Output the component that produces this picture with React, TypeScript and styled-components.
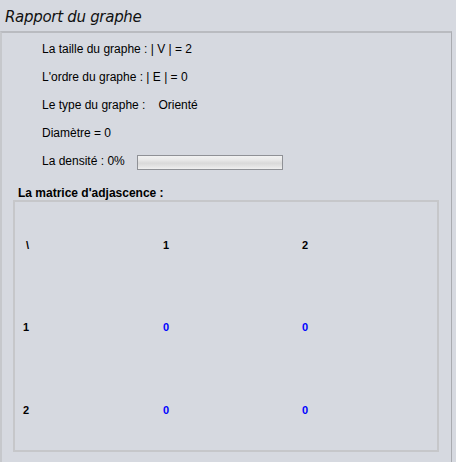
import React from "react";
import styled, { createGlobalStyle } from "styled-components";

const Global = createGlobalStyle`
  html, body { margin: 0; padding: 0; background: #d6d9e0; }
  body { font-family: "Liberation Sans", Arial, sans-serif; color: #000; }
`;

const Page = styled.div`
  width: 456px;
  height: 462px;
  background: #d6d9e0;
  display: flex;
  flex-direction: column;
  overflow: hidden;
`;

const TitleBar = styled.div`
  height: 31px;
  padding-left: 5px;
  display: flex;
  align-items: flex-start;
  box-sizing: border-box;
`;

const Title = styled.h1`
  margin: 8px 0 0 0;
  font-family: "DejaVu Sans", sans-serif;
  font-style: italic;
  font-weight: normal;
  font-size: 15px;
  line-height: 18px;
  color: #111;
  letter-spacing: -0.3px;
`;

const Panel = styled.div`
  width: 452px;
  flex: 1;
  box-sizing: border-box;
  border-top: 2px solid #b9bbc0;
  border-left: 2px solid #c6c8cc;
  border-right: 1px solid #a9abb0;
  display: flex;
  flex-direction: column;
  padding-top: 2px;
`;

const InfoList = styled.div`
  display: flex;
  flex-direction: column;
  padding-left: 40px;
`;

const InfoRow = styled.div`
  height: 28px;
  display: flex;
  align-items: center;
  font-size: 12px;
  white-space: pre;
`;

const Value = styled.span`
  margin-left: 13px;
`;

const Progress = styled.div`
  margin-left: 12px;
  margin-top: 2px;
  width: 146px;
  height: 15px;
  box-sizing: border-box;
  border: 1px solid #8f9196;
  background: linear-gradient(
    to bottom,
    #f2f2f2 0%,
    #e9e9e9 30%,
    #d9d9d9 55%,
    #e4e4e4 80%,
    #f0f0f0 100%
  );
`;

const MatrixLabel = styled.div`
  margin: 9px 0 0 16px;
  height: 16px;
  padding-top: 2px;
  box-sizing: border-box;
  font-size: 12px;
  font-weight: bold;
  line-height: 14px;
`;

const MatrixBox = styled.div`
  margin: 0 0 0 11px;
  width: 426px;
  height: 252px;
  box-sizing: border-box;
  border: 2px solid #c6c7ca;
  display: grid;
  grid-template-columns: 140px 139px 1fr;
  grid-template-rows: repeat(3, 1fr);
`;

const Cell = styled.div<{ $value?: boolean; $shift?: number }>`
  display: flex;
  align-items: center;
  padding-left: ${(p) => 8 + (p.$shift ?? 0)}px;
  padding-top: 3px;
  font-size: 11px;
  font-weight: bold;
  color: ${(p) => (p.$value ? "#0000ff" : "#000")};
`;

const headers = ["1", "2"];
const matrix = [
  [0, 0],
  [0, 0],
];

export default function App() {
  return (
    <Page>
      <Global />
      <TitleBar>
        <Title>Rapport du graphe</Title>
      </TitleBar>
      <Panel>
        <InfoList>
          <InfoRow>La taille du graphe : | V | = 2</InfoRow>
          <InfoRow>L'ordre du graphe : | E | = 0</InfoRow>
          <InfoRow>
            Le type du graphe :<Value>Orienté</Value>
          </InfoRow>
          <InfoRow>Diamètre = 0</InfoRow>
          <InfoRow>
            La densité : 0%
            <Progress />
          </InfoRow>
        </InfoList>
        <MatrixLabel>La matrice d'adjascence :</MatrixLabel>
        <MatrixBox>
          <Cell $shift={3}>\</Cell>
          {headers.map((h) => (
            <Cell key={h}>{h}</Cell>
          ))}
          {matrix.map((row, i) => (
            <React.Fragment key={i}>
              <Cell>{headers[i]}</Cell>
              {row.map((v, j) => (
                <Cell key={j} $value>
                  {v}
                </Cell>
              ))}
            </React.Fragment>
          ))}
        </MatrixBox>
      </Panel>
    </Page>
  );
}
